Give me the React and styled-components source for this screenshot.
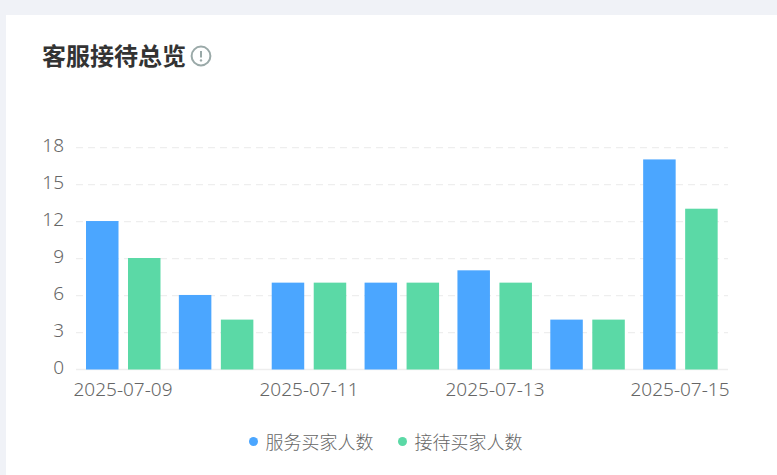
import React from 'react';
import styled, { createGlobalStyle } from 'styled-components';

const Global = createGlobalStyle`
  html, body { margin: 0; padding: 0; background: #f0f2f7; overflow: hidden; }
  body { font-family: "Noto Sans CJK SC", "Liberation Sans", sans-serif; }
`;
const Page = styled.div`
  width: 777px; height: 475px; box-sizing: border-box; padding: 15px 0 0 6px; overflow: hidden;
`;
const Card = styled.section`
  background: #fff; height: 460px; box-sizing: border-box; padding: 22px 0 0 36px;
  display: flex; flex-direction: column;
`;
const Header = styled.header`
  display: flex; align-items: center; gap: 4px; height: 36px;
`;
const Title = styled.h2`
  margin: 0; font-size: 24px; line-height: 36px; font-weight: 700; color: #333;
`;
const InfoIcon = styled.svg`
  width: 22px; height: 22px; display: block; margin-top: 2px;
`;
const ChartWrap = styled.div`
  margin: 37px 0 0 -42px; width: 777px; height: 318px; flex: none;
`;
const AxisText = styled.text`
  font-size: 19px; font-weight: 300; fill: #666;
  font-family: "Noto Sans", "Noto Sans CJK SC", sans-serif;
`;
const Legend = styled.div`
  display: flex; justify-content: center; gap: 24px; margin: 0 0 0 -42px; width: 771px;
`;
const LegendItem = styled.div`
  display: flex; align-items: center; gap: 8px; font-size: 18px; line-height: 26px; font-weight: 300; color: #666;
`;
const Dot = styled.span`
  width: 9px; height: 9px; border-radius: 50%; background: ${p => p.$color};
`;

const BLUE = '#4ba6ff';
const GREEN = '#5bd9a6';
const data = [[12, 9], [6, 4], [7, 7], [7, 7], [8, 7], [4, 4], [17, 13]];
const offset = 110;
const top = 147.7 - offset, bottom = 369.5 - offset, unit = (bottom - top) / 18;
const left = 76, step = 92.86;
const barTop = v => bottom - v * unit - 0.6;

function Chart() {
  return (
    <svg width="777" height="318" viewBox="0 0 777 318">
      {[3, 6, 9, 12, 15, 18].map(v => (
        <line key={v} x1={left} x2={728} y1={bottom - v * unit} y2={bottom - v * unit} stroke="#eeeeee" strokeWidth="1.2" strokeDasharray="7 5" />
      ))}
      <line x1={left} x2={728} y1={bottom} y2={bottom} stroke="#eeeeee" strokeWidth="1.5" />
      {[0, 3, 6, 9, 12, 15, 18].map(v => (
        <AxisText key={v} x={64} y={bottom - v * unit + 4} textAnchor="end">{v}</AxisText>
      ))}
      {data.map(([a, b], i) => (
        <g key={i}>
          <rect x={left + 10 + i * step} y={barTop(a)} width={32.5} height={bottom - barTop(a)} fill={BLUE} />
          <rect x={left + 52 + i * step} y={barTop(b)} width={32.5} height={bottom - barTop(b)} fill={GREEN} />
        </g>
      ))}
      {[['2025-07-09', 123], ['2025-07-11', 309], ['2025-07-13', 495], ['2025-07-15', 680]].map(([t, x]) => (
        <AxisText key={t} x={x} y={bottom + 26} textAnchor="middle">{t}</AxisText>
      ))}
    </svg>
  );
}

export default function App() {
  return (
    <Page>
      <Global />
      <Card>
        <Header>
          <Title>客服接待总览</Title>
          <InfoIcon viewBox="0 0 22 22" fill="none">
            <circle cx="11" cy="11" r="9.4" stroke="#9aa9a8" strokeWidth="2" />
            <path d="M11 6v6.4" stroke="#9aa9a8" strokeWidth="2" />
            <circle cx="11" cy="15.4" r="1.2" fill="#9aa9a8" />
          </InfoIcon>
        </Header>
        <ChartWrap><Chart /></ChartWrap>
        <Legend>
          <LegendItem><Dot $color={BLUE} />服务买家人数</LegendItem>
          <LegendItem><Dot $color={GREEN} />接待买家人数</LegendItem>
        </Legend>
      </Card>
    </Page>
  );
}
